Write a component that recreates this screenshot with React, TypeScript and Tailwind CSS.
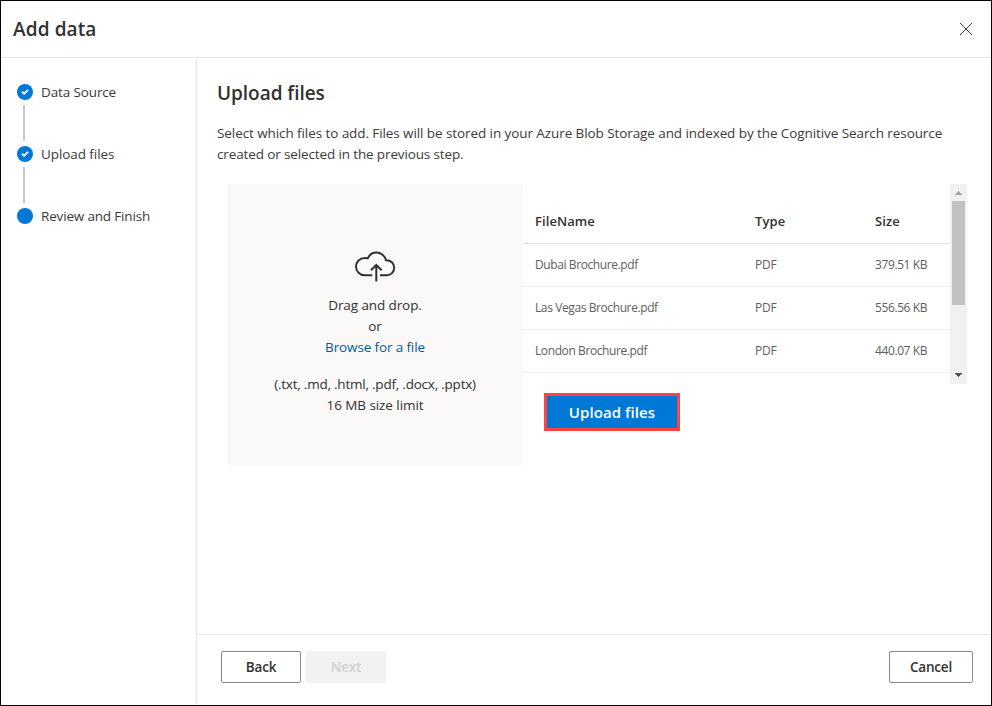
import React from "react";

type StepProps = { label: string; tracking: string; done?: boolean; last?: boolean };

function Step({ label, tracking, done, last }: StepProps) {
  return (
    <li className="flex flex-col">
      <div className="flex h-4 items-center gap-2">
        <svg width="16" height="16" viewBox="0 0 16 16" className="shrink-0">
          <circle cx="8" cy="8" r="8" fill="#0078d7" />
          {done && (
            <path d="M4.9 7.7 L7.1 9.7 L11.1 5.9" fill="none" stroke="#fff" strokeWidth="1.8" />
          )}
        </svg>
        <span className={`text-[13.5px] leading-4 whitespace-nowrap ${tracking}`}>{label}</span>
      </div>
      {!last && <div className="mt-[5px] mb-[5px] ml-1.5 h-9 w-0.5 bg-[#c8c8c8]" />}
    </li>
  );
}

const files = [
  { name: "Dubai Brochure.pdf", type: "PDF", size: "379.51 KB" },
  { name: "Las Vegas Brochure.pdf", type: "PDF", size: "556.56 KB" },
  { name: "London Brochure.pdf", type: "PDF", size: "440.07 KB" },
];

function FileTable() {
  return (
    <div className="flex h-[200px] w-[444px]">
      <div className="flex-1">
        <div className="grid h-[60px] grid-cols-[220px_120px_1fr] items-end border-b border-[#e5e5e5] pb-3 pl-3 text-[13px] leading-5 font-semibold tracking-[0.08px]">
          <span>FileName</span>
          <span>Type</span>
          <span>Size</span>
        </div>
        {files.map((f) => (
          <div
            key={f.name}
            className="grid h-[43px] grid-cols-[220px_120px_1fr] items-center border-b border-[#f0f0f0] pl-3 text-[12px] tracking-[-0.4px] text-[#605e5c]"
          >
            <span>{f.name}</span>
            <span className="tracking-[-0.2px]">{f.type}</span>
            <span>{f.size}</span>
          </div>
        ))}
      </div>
      <div className="flex w-[17px] flex-col items-center bg-[#f1f1f1]">
        <svg width="17" height="17" viewBox="0 0 17 17" shapeRendering="crispEdges">
          <path d="M5 11 L8.5 7 L12 11 Z" fill="#a3a3a3" />
        </svg>
        <div className="h-[104px] w-[13px] bg-[#c1c1c1]" />
        <div className="flex-1" />
        <svg width="17" height="17" viewBox="0 0 17 17" shapeRendering="crispEdges">
          <path d="M5 6 L12 6 L8.5 10 Z" fill="#505050" />
        </svg>
      </div>
    </div>
  );
}

function DropZone() {
  return (
    <div className="flex h-[282px] w-[296px] flex-col items-center bg-[#faf9f8] pt-[66px] text-center text-[13.5px] leading-[21px]">
      <svg width="42" height="34" viewBox="0 0 42 34" fill="none" stroke="#323130" strokeWidth="2">
        <path d="M18.3 25.3 H10.8 C5.8 25.3 2 21.5 2 16.6 C2 11.7 5.9 8 10.6 8 C11.7 8 12.7 8.1 13.7 8.4 C15.3 5 18.6 2.6 22.3 2.6 C27 2.6 31 5.9 32 10.3 C36.8 10.2 40.2 13.3 40.2 17.8 C40.2 22 37 25.3 32.8 25.3 H26" />
        <path d="M22.3 31.5 V15.5 M17 20.3 L22.3 15 L27.6 20.3" />
      </svg>
      <div className="mt-[11px] tracking-[-0.1px]">Drag and drop.</div>
      <div>or</div>
      <div className="tracking-[-0.13px] text-[#005a9e]">Browse for a file</div>
      <div className="mt-4 tracking-[-0.22px]">(.txt, .md, .html, .pdf, .docx, .pptx)</div>
      <div className="tracking-[-0.07px]">16 MB size limit</div>
    </div>
  );
}

export default function App() {
  return (
    <div className="flex h-[706px] w-[992px] flex-col overflow-hidden border border-black bg-white font-['Open_Sans','Noto_Sans',sans-serif] text-[#323130]">
      <header className="flex h-[57px] shrink-0 items-center justify-between border-b border-[#e6e6e6] pr-[18px] pl-3">
        <h1 className="text-[19px] leading-6 font-semibold tracking-[0.12px]">Add data</h1>
        <svg width="14" height="14" viewBox="0 0 14 14" stroke="#3b3a39" strokeWidth="1">
          <path d="M1 1 L13 13 M13 1 L1 13" />
        </svg>
      </header>
      <div className="flex min-h-0 flex-1">
        <nav className="w-[196px] shrink-0 border-r border-[#e6e6e6] pt-[26px] pl-4 text-[#3b3a39]">
          <ul>
            <Step label="Data Source" tracking="tracking-[-0.13px]" done />
            <Step label="Upload files" tracking="tracking-[-0.08px]" done />
            <Step label="Review and Finish" tracking="tracking-[-0.17px]" last />
          </ul>
        </nav>
        <div className="flex min-w-0 flex-1 flex-col">
          <main className="flex-1 pt-[22px] pl-5">
            <h2 className="text-[19px] leading-[26px] font-semibold tracking-[-0.04px]">Upload files</h2>
            <p className="mt-[17px] text-[13.5px] leading-[21px] tracking-[-0.084px] whitespace-nowrap text-[#3b3a39]">
              Select which files to add. Files will be stored in your Azure Blob Storage and indexed by the Cognitive Search resource
              <br />
              <span className="tracking-[-0.13px]">created or selected in the previous step.</span>
            </p>
            <div className="mt-[19px] ml-2.5 flex">
              <DropZone />
              <div className="flex flex-col items-start">
                <FileTable />
                <button className="mt-[9px] ml-[21px] h-[38px] w-[136px] border-[3px] border-[#ff4343] bg-[#0078d7] text-[15px] font-semibold tracking-[0.08px] text-white">
                  Upload files
                </button>
              </div>
            </div>
          </main>
          <footer className="flex h-[71px] shrink-0 gap-[5px] border-t border-[#e6e6e6] pt-4 pr-[18px] pl-6 text-[13.5px] font-semibold tracking-[-0.2px]">
            <button className="h-8 w-20 rounded-[2px] border border-[#8a8886]">Back</button>
            <button className="h-8 w-20 rounded-[2px] bg-[#f3f2f1] text-[#d2d0ce]">Next</button>
            <button className="ml-auto h-8 w-[84px] rounded-[2px] border border-[#8a8886]">Cancel</button>
          </footer>
        </div>
      </div>
    </div>
  );
}
